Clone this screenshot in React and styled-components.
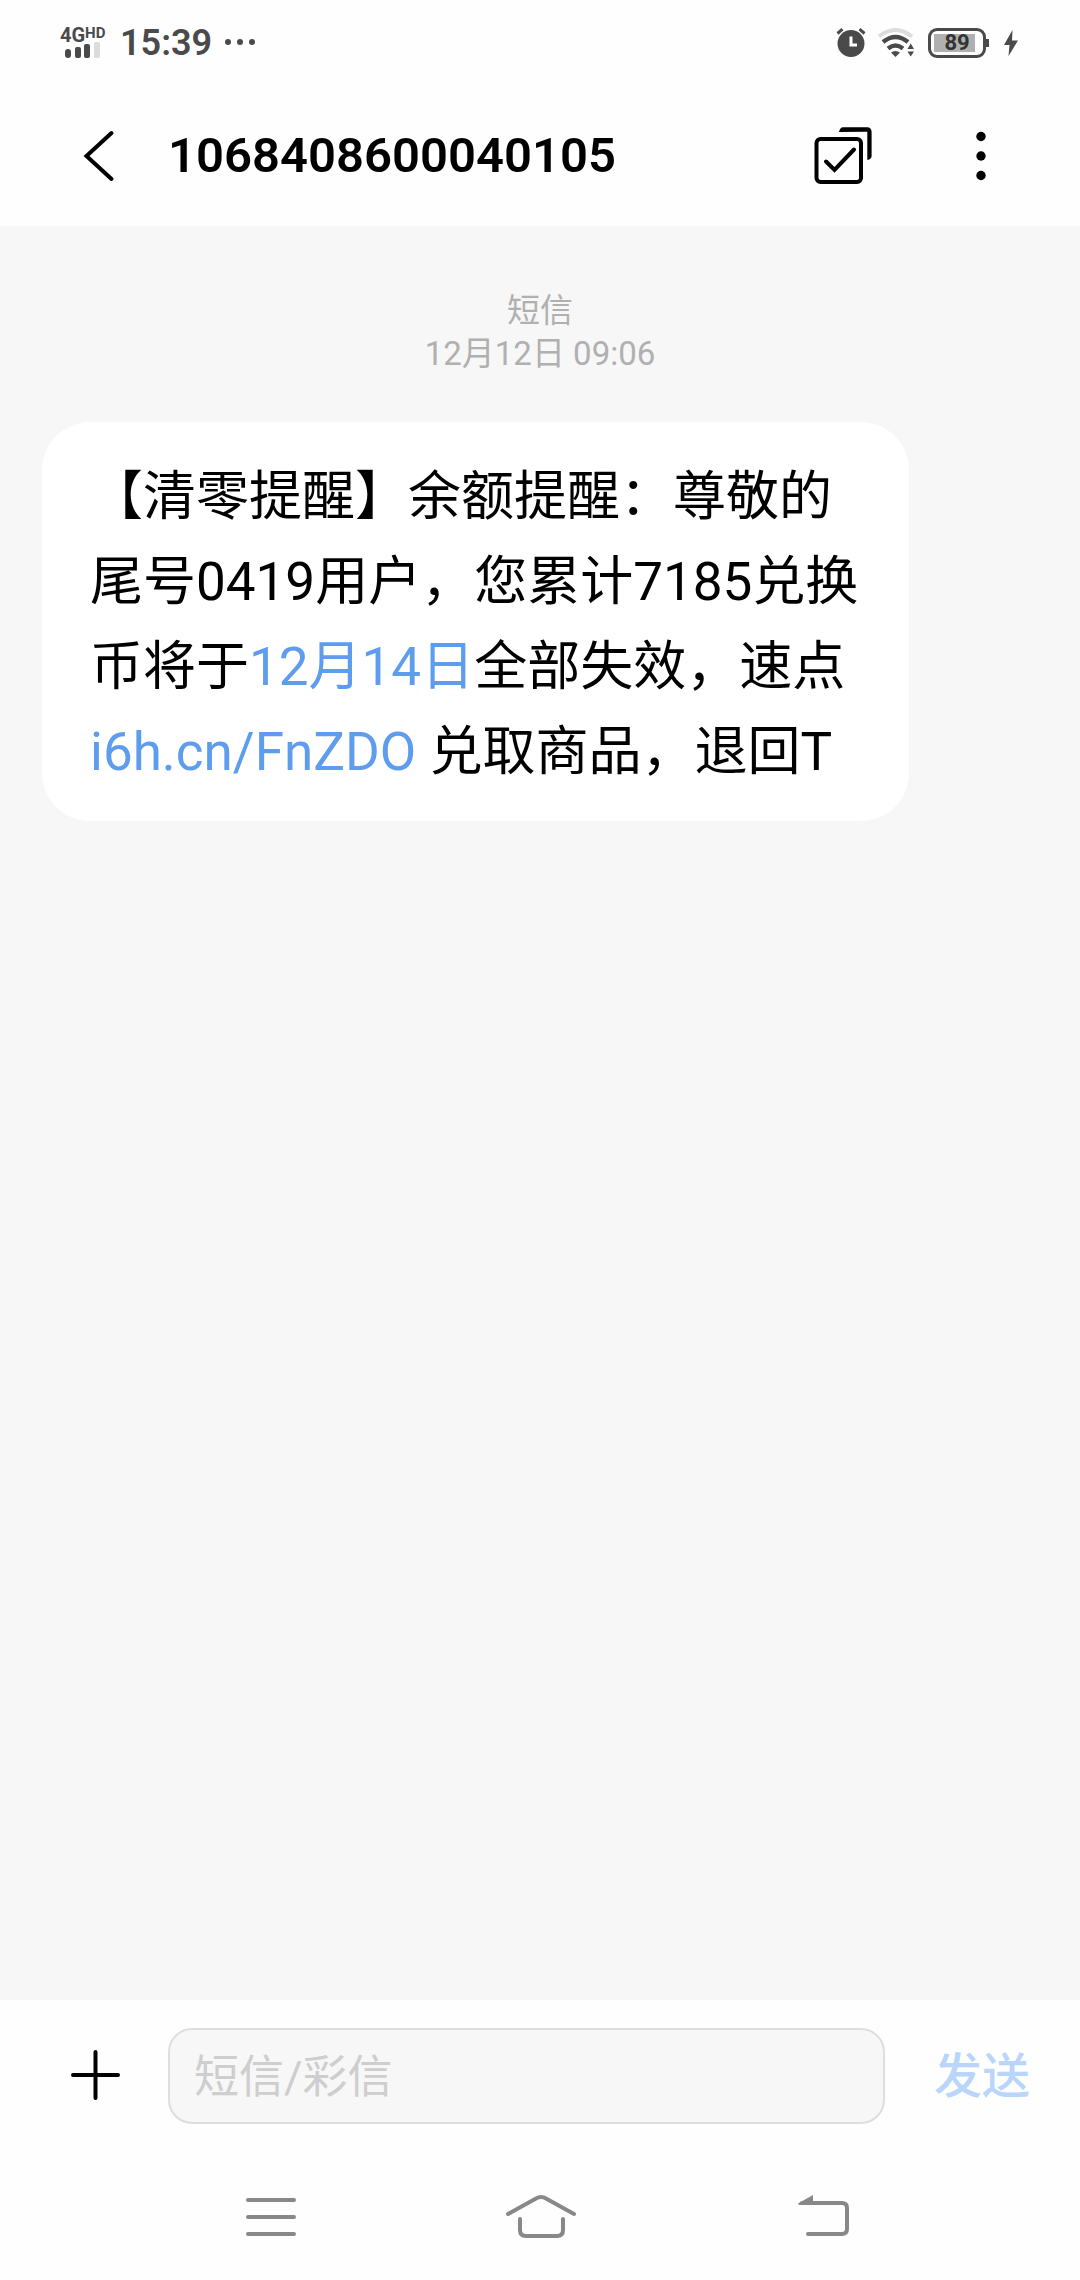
import React from "react";
import styled, { createGlobalStyle } from "styled-components";

const GlobalStyle = createGlobalStyle`
  *, *::before, *::after { box-sizing: border-box; }
  body {
    margin: 0;
    background: #fefefe;
    color: #000;
    font-family: Roboto, "Noto Sans CJK SC", sans-serif;
  }
`;

const Screen = styled.div`
  display: flex;
  flex-direction: column;
  min-height: 100vh;
`;

const StatusBar = styled.div`
  display: flex;
  align-items: center;
  justify-content: space-between;
  height: 86px;
  padding: 0 60px;
  color: #4a4a4a;
`;

const StatusGroup = styled.div`
  display: flex;
  align-items: center;
  gap: 12px;
`;

const Network = styled.div`
  display: flex;
  flex-direction: column;
  width: 48px;
`;

const NetworkLabel = styled.div`
  display: flex;
  align-items: flex-start;
  font-size: 20px;
  font-weight: 700;
  line-height: 14px;
`;

const NetworkTag = styled.span`
  font-size: 15px;
  line-height: 10px;
`;

const Clock = styled.time`
  font-size: 36px;
  font-weight: 600;
  line-height: 44px;
`;

const Battery = styled.div`
  position: relative;
  display: flex;
  width: 58px;
  height: 30px;
  margin: 0 6px 0 2px;
  padding: 3px;
  border: 3px solid #4a4a4a;
  border-radius: 9px;

  &::after {
    content: "";
    position: absolute;
    top: 8px;
    right: -6px;
    width: 3px;
    height: 8px;
    background: #4a4a4a;
  }
`;

const BatteryFill = styled.span`
  width: 89%;
  background: #b0b0b0;
`;

const BatteryLevel = styled.span`
  position: absolute;
  inset: 0;
  font-size: 22px;
  font-weight: 700;
  line-height: 24px;
  text-align: center;
  color: #333;
`;

const Header = styled.header`
  display: flex;
  align-items: center;
  height: 140px;
  padding: 0 69px 0 68px;
`;

const Title = styled.h1`
  flex: 1;
  margin: 0 0 0 40px;
  font-size: 49px;
  font-weight: 600;
  line-height: 60px;
`;

const Actions = styled.div`
  display: flex;
  gap: 78px;
`;

const IconButton = styled.button`
  display: flex;
  flex: none;
  padding: 0;
  border: 0;
  background: none;
  color: ${(p) => p.$color || "#000"};
`;

const Conversation = styled.main`
  display: flex;
  flex: 1;
  flex-direction: column;
  align-items: flex-start;
  gap: 47px;
  padding: 63px 42px;
  background: #f7f7f7;
`;

const Stamp = styled.div`
  align-self: center;
  font-size: 33px;
  line-height: 43px;
  text-align: center;
  color: #b0b0b0;
`;

const StampLine = styled.div``;

const Bubble = styled.p`
  max-width: 867px;
  margin: 0;
  padding: 33px 48px 26px;
  border-radius: 48px;
  background: #fff;
  font-size: 53px;
  line-height: 85px;
  text-spacing-trim: space-all;
`;

const MessageLink = styled.a`
  color: #5e9cee;
  text-decoration: none;
`;

const Composer = styled.form`
  display: flex;
  align-items: center;
  height: 152px;
  padding: 0 50px 0 66px;
`;

const MessageInput = styled.input`
  flex: 1;
  min-width: 0;
  height: 96px;
  margin: 0 49px 0 42px;
  padding: 2px 24px 0;
  border: 2px solid #dedede;
  border-radius: 24px;
  outline: 0;
  background: #f7f7f7;
  color: #000;
  font-family: inherit;
  font-size: 45px;
  font-weight: 400;

  &::placeholder {
    color: #cecece;
    opacity: 1;
  }
`;

const SendButton = styled.button`
  padding: 2px 0 0;
  border: 0;
  background: none;
  color: #b9d5fa;
  font-family: inherit;
  font-size: 48px;
  font-weight: 500;
  line-height: 60px;
`;

const SystemNav = styled.nav`
  display: grid;
  grid-template-columns: repeat(3, 1fr);
  justify-items: center;
  align-items: center;
  height: 128px;
  padding: 0 136px;
`;

const SignalBars = () => (
  <svg width="48" height="16" viewBox="0 0 48 16" fill="currentColor" aria-hidden="true">
    <rect x="5" y="7" width="6" height="9" rx="3" />
    <rect x="15" y="5" width="6" height="11" rx="2" />
    <rect x="24" y="2" width="6" height="14" rx="2" />
    <rect x="34" y="0" width="6" height="16" rx="2" fill="#dcdcdc" />
  </svg>
);

const MoreDots = () => (
  <svg width="32" height="8" viewBox="0 0 32 8" fill="currentColor" aria-hidden="true">
    <circle cx="4" cy="3" r="3" />
    <circle cx="16" cy="3" r="3" />
    <circle cx="28" cy="3" r="3" />
  </svg>
);

const AlarmIcon = () => (
  <svg width="30" height="30" viewBox="0 0 30 30" aria-hidden="true">
    <circle cx="15" cy="15.5" r="13.5" fill="currentColor" />
    <path d="M1.5 5.5 6.5 1.2M28.5 5.5 23.5 1.2" stroke="currentColor" strokeWidth="3" />
    <path d="M15 8.5V17H21" fill="none" stroke="#fff" strokeWidth="3" />
  </svg>
);

const WifiIcon = () => (
  <svg width="36" height="30" viewBox="0 0 36 30" fill="none" aria-hidden="true">
    <path d="M1 8.5Q17.5-4.5 34 8.5" stroke="#dcdcdc" strokeWidth="4" />
    <path d="M5 14Q17.5 4 30 14" stroke="currentColor" strokeWidth="4.5" />
    <path d="M10 20.5Q17.5 14.5 25 20.5" stroke="currentColor" strokeWidth="4.5" />
    <path d="M13 24.5Q17.5 21.5 22 24.5L17.5 29Z" fill="currentColor" />
    <path d="M29.5 21 32.7 15.5 36 21ZM29.5 23.5 32.7 28.5 36 23.5Z" fill="currentColor" />
  </svg>
);

const BoltIcon = () => (
  <svg width="16" height="28" viewBox="0 0 16 28" aria-hidden="true">
    <path d="M8.5 1 0 16H5.5L4.5 27 14 11.5H8Z" fill="currentColor" />
  </svg>
);

const BackIcon = () => (
  <svg width="60" height="60" viewBox="0 0 60 60" fill="none" stroke="currentColor" strokeWidth="4" strokeLinecap="round" aria-hidden="true">
    <path d="M43.5 7 18.5 30 43.5 53" />
  </svg>
);

const SelectIcon = () => (
  <svg width="60" height="60" viewBox="0 0 60 60" fill="none" aria-hidden="true">
    <rect x="3.5" y="13" width="44.5" height="43" rx="4" stroke="currentColor" strokeWidth="4" />
    <path d="M13 35.5 21.5 44 41 23.5" stroke="currentColor" strokeWidth="4" strokeLinecap="round" />
    <path d="M26 6Q27 1.3 30 1.3H54Q58.6 1.3 58.6 6V30Q58.6 33 54.3 34V5.8Z" fill="currentColor" />
  </svg>
);

const KebabIcon = () => (
  <svg width="60" height="60" viewBox="0 0 60 60" fill="currentColor" aria-hidden="true">
    <circle cx="30" cy="10.5" r="4.7" />
    <circle cx="30" cy="30" r="4.7" />
    <circle cx="30" cy="49.5" r="4.7" />
  </svg>
);

const PlusIcon = () => (
  <svg width="60" height="60" viewBox="0 0 60 60" stroke="currentColor" strokeWidth="4" strokeLinecap="round" aria-hidden="true">
    <path d="M29.5 6V52M7 29H52" />
  </svg>
);

const MenuIcon = () => (
  <svg width="72" height="60" viewBox="0 0 72 60" stroke="currentColor" strokeWidth="4" strokeLinecap="round" aria-hidden="true">
    <path d="M13 14H59M13 31H59M13 48H59" />
  </svg>
);

const HomeIcon = () => (
  <svg width="72" height="60" viewBox="0 0 72 60" fill="none" stroke="currentColor" strokeWidth="4" strokeLinecap="round" aria-hidden="true">
    <path d="M4 28 32 12.5Q37 9.5 42 12.5L70 28" />
    <path d="M16 33V44Q16 50 22 50H53Q59 50 59 44V33" />
  </svg>
);

const ReturnIcon = () => (
  <svg width="102" height="60" viewBox="0 0 102 60" fill="none" stroke="currentColor" strokeWidth="4" strokeLinecap="round" aria-hidden="true">
    <path d="M44 17H84Q89 17 89 22V43Q89 48 84 48H50" />
    <path d="M40 17.5 55 9V19H41Z" fill="currentColor" stroke="none" />
  </svg>
);

export default function App() {
  return (
    <Screen lang="zh-CN">
      <GlobalStyle />
      <StatusBar>
        <StatusGroup>
          <Network>
            <NetworkLabel>
              4G<NetworkTag>HD</NetworkTag>
            </NetworkLabel>
            <SignalBars />
          </Network>
          <Clock>15:39</Clock>
          <MoreDots />
        </StatusGroup>
        <StatusGroup>
          <AlarmIcon />
          <WifiIcon />
          <Battery>
            <BatteryFill />
            <BatteryLevel>89</BatteryLevel>
          </Battery>
          <BoltIcon />
        </StatusGroup>
      </StatusBar>

      <Header>
        <IconButton type="button" aria-label="返回">
          <BackIcon />
        </IconButton>
        <Title>1068408600040105</Title>
        <Actions>
          <IconButton type="button" aria-label="选择">
            <SelectIcon />
          </IconButton>
          <IconButton type="button" aria-label="更多">
            <KebabIcon />
          </IconButton>
        </Actions>
      </Header>

      <Conversation>
        <Stamp>
          <StampLine>短信</StampLine>
          <StampLine>12月12日 09:06</StampLine>
        </Stamp>
        <Bubble>
          【清零提醒】余额提醒：尊敬的尾号0419用户，您累计7185兑换币将于
          <MessageLink href="#date">12月14日</MessageLink>
          全部失效，速点
          <MessageLink href="#link">i6h.cn/FnZDO</MessageLink> 兑取商品，退回T
        </Bubble>
      </Conversation>

      <Composer onSubmit={(e) => e.preventDefault()}>
        <IconButton type="button" aria-label="添加">
          <PlusIcon />
        </IconButton>
        <MessageInput type="text" placeholder="短信/彩信" aria-label="短信/彩信" />
        <SendButton type="submit">发送</SendButton>
      </Composer>

      <SystemNav>
        <IconButton type="button" aria-label="菜单" $color="#888">
          <MenuIcon />
        </IconButton>
        <IconButton type="button" aria-label="主页" $color="#888">
          <HomeIcon />
        </IconButton>
        <IconButton type="button" aria-label="后退" $color="#888">
          <ReturnIcon />
        </IconButton>
      </SystemNav>
    </Screen>
  );
}
